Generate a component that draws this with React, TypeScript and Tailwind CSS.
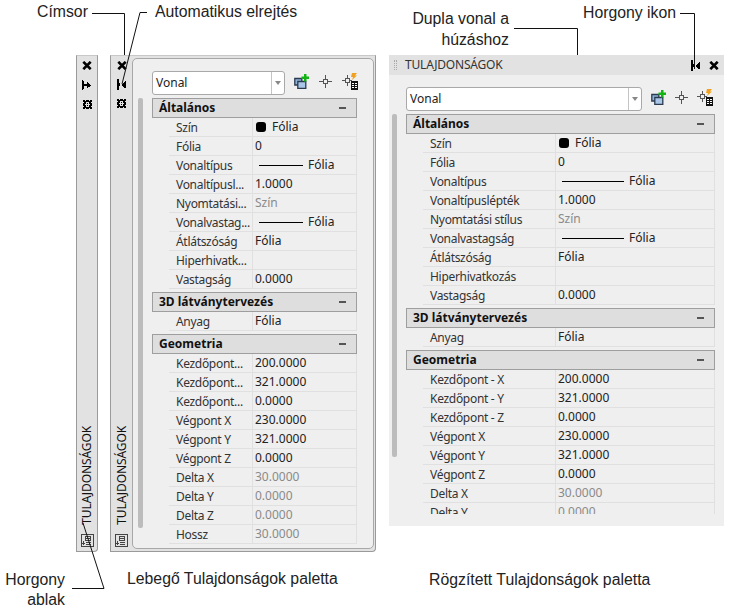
import React from 'react';

type Row = { label: string; value?: string; muted?: boolean; swatch?: boolean; line?: boolean };
type Section = { title: string; rows: Row[] };

const sections = (short: boolean): Section[] => [
  {
    title: 'Általános',
    rows: [
      { label: 'Szín', value: 'Fólia', swatch: true },
      { label: 'Fólia', value: '0' },
      { label: 'Vonaltípus', value: 'Fólia', line: true },
      { label: short ? 'Vonaltípusl...' : 'Vonaltípuslépték', value: '1.0000' },
      { label: short ? 'Nyomtatási...' : 'Nyomtatási stílus', value: 'Szín', muted: true },
      { label: short ? 'Vonalvastag...' : 'Vonalvastagság', value: 'Fólia', line: true },
      { label: 'Átlátszóság', value: 'Fólia' },
      { label: short ? 'Hiperhivatk...' : 'Hiperhivatkozás' },
      { label: 'Vastagság', value: '0.0000' },
    ],
  },
  { title: '3D látványtervezés', rows: [{ label: 'Anyag', value: 'Fólia' }] },
  {
    title: 'Geometria',
    rows: [
      { label: short ? 'Kezdőpont...' : 'Kezdőpont - X', value: '200.0000' },
      { label: short ? 'Kezdőpont...' : 'Kezdőpont - Y', value: '321.0000' },
      { label: short ? 'Kezdőpont...' : 'Kezdőpont - Z', value: '0.0000' },
      { label: 'Végpont X', value: '230.0000' },
      { label: 'Végpont Y', value: '321.0000' },
      { label: 'Végpont Z', value: '0.0000' },
      { label: 'Delta X', value: '30.0000', muted: true },
      { label: 'Delta Y', value: '0.0000', muted: true },
      { label: 'Delta Z', value: '0.0000', muted: true },
      { label: 'Hossz', value: '30.0000', muted: true },
    ],
  },
];

const CloseIcon = () => (
  <svg width="10" height="9" viewBox="0 0 10 9">
    <path d="M1.300 .8l7.400 7.400M8.700 .8l-7.400 7.400" stroke="#000" strokeWidth="2.600" />
  </svg>
);

const PinIcon = () => (
  <svg width="9" height="11" viewBox="0 0 9 11" shapeRendering="crispEdges">
    <path d="M0 0h2v11H0zM2 4h1v3H2z" fill="#000" />
    <path d="M8 2h1v7H8zM7 2.500h1v6H7zM6 3.500h1v4H6zM5 4.500h1v2H5z" fill="#000" />
  </svg>
);

const AutoHideIcon = () => (
  <svg width="10" height="10" viewBox="0 0 10 10" shapeRendering="crispEdges">
    <path d="M0 0h1v10H0zM1 1h1v8H1zM2 4h4v2H2z" fill="#000" />
    <path d="M5 2h1v6H5zM6 3h1v4H6zM7 3.500h1v3H7zM8 4.500h1v1H8z" fill="#000" />
  </svg>
);

const gearRows = ['##.###.##', '#########', '.##...##.', '###.#.###', '##.....##', '###.#.###', '.##...##.', '#########', '##.###.##'];

const GearIcon = () => (
  <svg width="9" height="9" viewBox="0 0 9 9" shapeRendering="crispEdges">
    {gearRows.map((cells, y) =>
      cells.split('').map((c, x) => (c === '#' ? <rect key={`${x}-${y}`} x={x} y={y} width="1" height="1" fill="#000" /> : null)),
    )}
  </svg>
);

const AnchorBoxIcon = () => (
  <svg width="13" height="13" viewBox="0 0 13 13" fill="none" stroke="#444" shapeRendering="crispEdges">
    <path d="M.5.5h12v12H.5z" />
    <path d="M4.500 2.500h5v4h-5zM4.500 4.500h5M2.500 7v4M1 9.500h3M5 8.500h5M5 10.500h5" />
  </svg>
);

const AddIcon = () => (
  <svg width="15" height="15" viewBox="0 0 15 15" className="shrink-0">
    <path d="M.8 4.500h7v6.500h-7z" fill="#8fb2d9" stroke="#2b3a4f" strokeWidth="1.300" />
    <path d="M3.800 7.500h8v6.800h-8z" fill="#a9c6e8" stroke="#2b3a4f" strokeWidth="1.300" />
    <path d="M7.500 2.500H10V0h2.500v2.500H15V5h-2.500v2.500H10V5H7.500z" fill="#12b312" />
  </svg>
);

const PickIcon = () => (
  <svg width="13" height="13" viewBox="0 0 13 13" fill="none" stroke="#555" className="shrink-0" shapeRendering="crispEdges">
    <path d="M4.500 4.500h4v4h-4zM6.500 0v4M6.500 9v4M0 6.500h4M9 6.500h4" />
  </svg>
);

const QuickSelectIcon = () => (
  <svg width="16" height="17" viewBox="0 0 16 17" fill="none" className="shrink-0">
    <path d="M3.500 5.500h4v4h-4zM5.500 1.500v4M5.500 10v3M0 7.500h3.500M8 7.500h1.500" stroke="#555" shapeRendering="crispEdges" />
    <path d="M10 0h5l-2 2.500h2L10 7l1-3H9z" fill="#f0a020" />
    <path d="M9 8h7v9H9z" fill="#111" />
    <path d="M10 10h2v1h-2zM13 10h2v1h-2zM10 12h2v1h-2zM13 12h2v1h-2zM10 14h2v1h-2zM13 14h2v1h-2z" fill="#fff" />
  </svg>
);

const Dropdown = ({ wide }: { wide?: boolean }) => (
  <div className="flex items-center">
    <div className={`flex h-6 shrink-0 items-stretch rounded-[3px] border border-[#a9a9a9] bg-white ${wide ? 'w-[236px]' : 'w-[133px]'}`}>
      <span className="flex-1 pl-[3px] text-[12px] leading-[22px] text-[#222]">Vonal</span>
      <span className="flex w-[13px] items-center justify-center border-l border-[#c4c4c4]">
        <span className="h-0 w-0 border-x-[3px] border-t-[4px] border-x-transparent border-t-[#888]" />
      </span>
    </div>
    <div className={`-mt-[3px] ml-[9px] flex items-center ${wide ? 'gap-[9px]' : 'gap-[10px]'}`}>
      <AddIcon />
      <PickIcon />
      <QuickSelectIcon />
    </div>
  </div>
);

const PropertyRow = ({ row, labelWidth, lineWidth }: { row: Row; labelWidth: string; lineWidth: string }) => (
  <div className="ml-[17px] flex h-[19px] border-b border-r border-[#e0e0e0] text-[12px] leading-[18px]">
    <div className={`${labelWidth} shrink-0 overflow-hidden whitespace-nowrap border-r border-[#e0e0e0] pl-[7px] pt-px tracking-[-0.3px] text-[#333]`}>
      {row.label}
    </div>
    <div className={`flex flex-1 items-center gap-[5px] pl-[2px] ${row.muted ? 'text-[#8a8a8a]' : 'text-[#222]'}`}>
      {row.swatch && <span className="ml-[1px] mr-[1px] h-[10px] w-[10px] rounded-[3px] bg-black" />}
      {row.line && <span className={`ml-[4px] h-px bg-black ${lineWidth}`} />}
      {row.value}
    </div>
  </div>
);

const SectionBlock = ({ section, labelWidth, lineWidth }: { section: Section; labelWidth: string; lineWidth: string }) => (
  <div className="mb-[3px]">
    <div className="flex h-5 items-center justify-between border border-[#9e9e9e] bg-[#dedede] pl-[6px] pr-[10px] text-[12px] font-bold text-[#111]">
      <span>{section.title}</span>
      <span className="h-[2px] w-[7px] bg-[#555]" />
    </div>
    {section.rows.map((row, i) => (
      <PropertyRow key={i} row={row} labelWidth={labelWidth} lineWidth={lineWidth} />
    ))}
  </div>
);

const VerticalTitle = () => (
  <span className="rotate-180 text-[12px] leading-none tracking-[-0.1px] text-[#111] [writing-mode:vertical-rl]">TULAJDONSÁGOK</span>
);

const CollapsedStrip = () => (
  <div className="flex h-[497px] w-[22px] flex-col items-center rounded-br-[4px] border-x border-b border-t border-[#9a9a9a] border-t-[#c8c8c8] bg-[#e2e2e2] pt-[5px]">
    <div className="flex flex-col items-center gap-[10px]">
      <CloseIcon />
      <AutoHideIcon />
      <GearIcon />
    </div>
    <div className="mb-[4px] mt-auto flex flex-col items-center gap-[9px]">
      <VerticalTitle />
      <AnchorBoxIcon />
    </div>
  </div>
);

const FloatingPalette = () => (
  <div className="flex h-[497px] w-[266px] rounded-br-[4px] border-x border-b border-t border-[#9a9a9a] border-t-[#c8c8c8] bg-[#e2e2e2]">
    <div className="flex w-[21px] shrink-0 flex-col items-center pb-[4px] pt-[5px]">
      <div className="flex flex-col items-center gap-[9px]">
        <CloseIcon />
        <PinIcon />
        <GearIcon />
      </div>
      <div className="mt-auto flex flex-col items-center gap-[9px]">
        <VerticalTitle />
        <AnchorBoxIcon />
      </div>
    </div>
    <div className="my-[2px] mr-px flex-1 overflow-hidden rounded-[5px] border border-[#a8a8a8] bg-[#efefef] pl-[5px] pr-[16px] pt-[12px]">
      <div className="ml-[14px]">
        <Dropdown />
      </div>
      <div className="mt-[3px] flex gap-[9px]">
        <div className="h-[430px] w-[5px] shrink-0 rounded-[2px] bg-[#bcbcbc]" />
        <div className="flex-1">
          {sections(true).map((s) => (
            <SectionBlock key={s.title} section={s} labelWidth="w-[84px]" lineWidth="w-[44px]" />
          ))}
        </div>
      </div>
    </div>
  </div>
);

const DockedPalette = () => (
  <div className="flex h-[471px] w-[335px] flex-col bg-[#efefef]">
    <div className="flex h-5 shrink-0 items-center bg-[#e2e2e2] pl-[5px] pr-[5px]">
      <span className="h-[10px] w-[3px] border-x border-dotted border-[#aaa]" />
      <span className="ml-[8px] flex-1 text-[12px] leading-none tracking-[-0.2px] text-[#333]">TULAJDONSÁGOK</span>
      <span className="mr-[9px] flex"><PinIcon /></span>
      <CloseIcon />
    </div>
    <div className="mr-[9px] h-[439px] overflow-hidden pl-[3px] pt-[12px]">
      <div className="ml-[14px]">
        <Dropdown wide />
      </div>
      <div className="mt-[3px] flex gap-[9px]">
        <div className="h-[343px] w-[5px] shrink-0 rounded-[2px] bg-[#bcbcbc]" />
        <div className="flex-1">
          {sections(false).map((s) => (
            <SectionBlock key={s.title} section={s} labelWidth="w-[133px]" lineWidth="w-[62px]" />
          ))}
        </div>
      </div>
    </div>
  </div>
);

const callout = "absolute text-[15.8px] text-[#222] [font-family:'Liberation_Sans',Arial,sans-serif]";

export default function App() {
  return (
    <div className="relative h-[616px] w-[733px] overflow-hidden bg-white [font-family:'Noto_Sans',sans-serif]">
      <div className="absolute left-[76px] top-[55px]"><CollapsedStrip /></div>
      <div className="absolute left-[110px] top-[55px]"><FloatingPalette /></div>
      <div className="absolute left-[389px] top-[55px]"><DockedPalette /></div>

      <svg className="pointer-events-none absolute left-0 top-0" width="733" height="616" fill="none" stroke="#111">
        <path d="M92 13.500h32.500V55" />
        <path d="M147 12.500h-7L122 84" />
        <path d="M514 28.500h63.500V55" />
        <path d="M680 13.500h14.500V69" />
        <path d="M72 588.500h32L83 523" />
      </svg>

      <span className={`${callout} left-[37px] top-[1px] leading-[21px]`}>Címsor</span>
      <span className={`${callout} left-[155px] top-[1px] leading-[21px]`}>Automatikus elrejtés</span>
      <span className={`${callout} right-[224px] top-[8px] text-right leading-[21px]`}>Dupla vonal a<br />húzáshoz</span>
      <span className={`${callout} left-[583px] top-[2px] leading-[21px]`}>Horgony ikon</span>
      <span className={`${callout} right-[668px] top-[570px] text-right leading-[20px]`}>Horgony<br />ablak</span>
      <span className={`${callout} left-[127px] top-[568px] leading-[21px]`}>Lebegő Tulajdonságok paletta</span>
      <span className={`${callout} left-[429px] top-[569px] leading-[21px]`}>Rögzített Tulajdonságok paletta</span>
    </div>
  );
}
